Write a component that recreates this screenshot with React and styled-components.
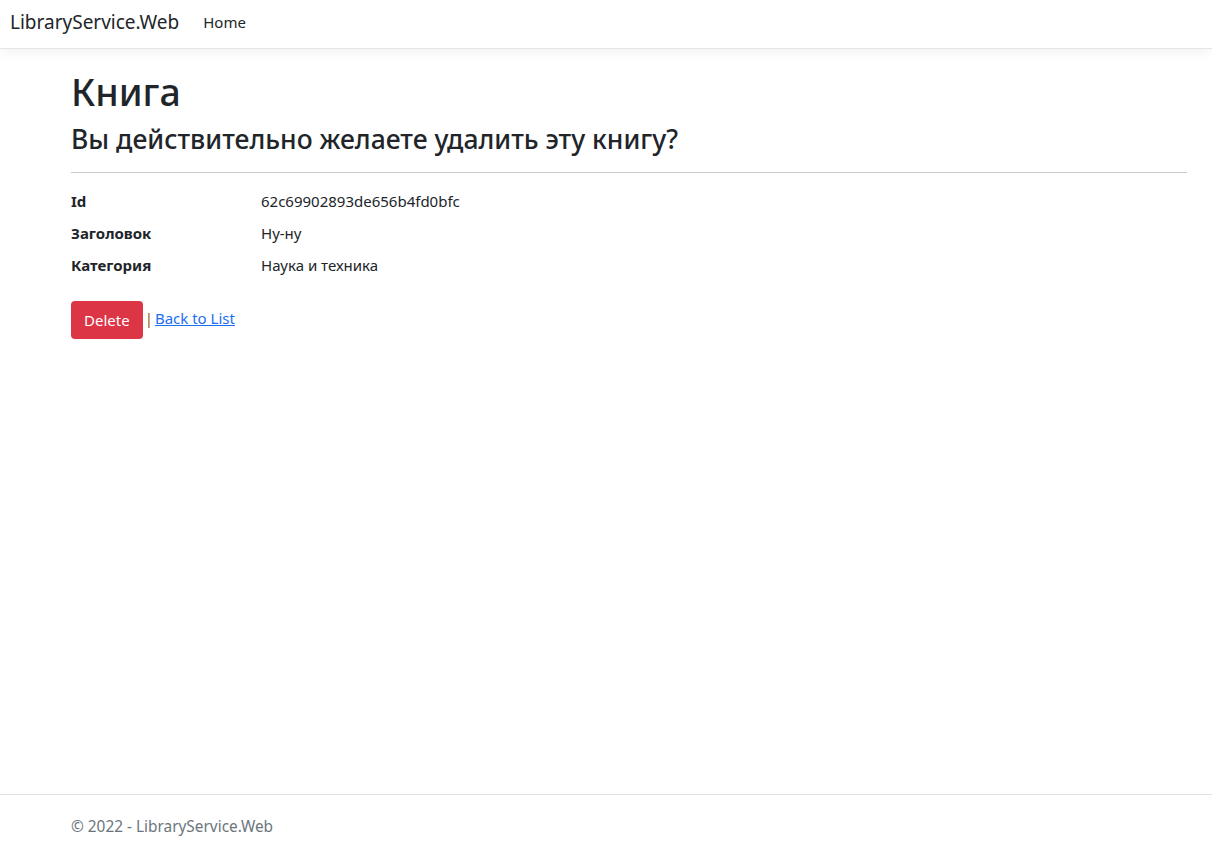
import React from 'react';
import styled, { createGlobalStyle } from 'styled-components';

const GlobalStyle = createGlobalStyle`
  html, body {
    margin: 0;
    padding: 0;
    background: #fff;
  }
  body {
    font-family: "Segoe UI", "Noto Sans", "Open Sans", sans-serif;
    font-size: 15px;
    color: #212529;
  }
  * {
    box-sizing: border-box;
  }
`;

const Page = styled.div`
  display: flex;
  flex-direction: column;
  min-height: 100vh;
`;

const NavBar = styled.header`
  display: flex;
  align-items: center;
  height: 49px;
  padding: 0 10px;
  background: #fff;
  border-bottom: 1px solid #e5e5e5;
  box-shadow: 0 4px 12px rgba(0, 0, 0, 0.05);
`;

const Brand = styled.a`
  font-size: 19px;
  color: #212529;
  text-decoration: none;
  margin-right: 24px;
  padding-bottom: 4px;
`;

const NavLink = styled.a`
  font-size: 15px;
  color: #212529;
  text-decoration: none;
  padding-bottom: 5px;
`;

const Main = styled.main`
  flex: 1;
  padding: 20px 25px 0 71px;
`;

const Title = styled.h1`
  font-size: 37.5px;
  font-weight: 500;
  line-height: 1.2;
  margin: 0 0 10px;
`;

const Subtitle = styled.h4`
  font-size: 26.5px;
  font-weight: 500;
  line-height: 1.2;
  margin: 0;
`;

const Rule = styled.hr`
  border: none;
  border-top: 1px solid #c8c8c8;
  margin: 16px 0 18px;
`;

const DetailList = styled.dl`
  display: grid;
  grid-template-columns: 190px 1fr;
  row-gap: 11px;
  margin: 0 0 25px;
  line-height: 21px;
`;

const Term = styled.dt`
  font-weight: 700;
  margin: 0;
`;

const Value = styled.dd`
  margin: 0;
`;

const Actions = styled.form`
  display: flex;
  align-items: center;
  gap: 2px;
`;

const DangerButton = styled.button`
  background: #dc3545;
  color: #fff;
  border: none;
  border-radius: 4px;
  height: 38px;
  padding: 0 13px;
  font-family: inherit;
  font-size: 15px;
`;

const Divider = styled.span`
  color: #8a5a16;
  margin-top: -3px;
`;

const BackLink = styled.a`
  color: #1b6ef3;
  text-decoration: underline;
  margin-top: -4px;
`;

const Footer = styled.footer`
  height: 56px;
  border-top: 1px solid #e0e0e0;
  display: flex;
  align-items: center;
  padding: 8px 0 0 71px;
  color: #6c757d;
  font-size: 15.4px;
`;

const details = [
  { label: 'Id', value: '62c69902893de656b4fd0bfc' },
  { label: 'Заголовок', value: 'Ну-ну' },
  { label: 'Категория', value: 'Наука и техника' },
];

export default function App() {
  return (
    <Page>
      <GlobalStyle />
      <NavBar>
        <Brand href="#">LibraryService.Web</Brand>
        <NavLink href="#">Home</NavLink>
      </NavBar>
      <Main>
        <Title>Книга</Title>
        <Subtitle>Вы действительно желаете удалить эту книгу?</Subtitle>
        <Rule />
        <DetailList>
          {details.map((d) => (
            <React.Fragment key={d.label}>
              <Term>{d.label}</Term>
              <Value>{d.value}</Value>
            </React.Fragment>
          ))}
        </DetailList>
        <Actions onSubmit={(e) => e.preventDefault()}>
          <DangerButton type="submit">Delete</DangerButton>
          <Divider>|</Divider>
          <BackLink href="#">Back to List</BackLink>
        </Actions>
      </Main>
      <Footer>© 2022 - LibraryService.Web</Footer>
    </Page>
  );
}
